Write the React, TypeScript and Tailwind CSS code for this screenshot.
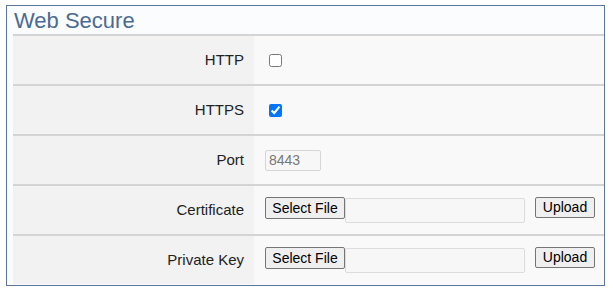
import React from "react";

const Row = ({ label, children, first }: { label: string; children: React.ReactNode; first?: boolean }) => (
  <div className={`flex h-[50px] ${first ? "border-t-2" : "border-t-2"} border-[#d4d4d4]`}>
    <div className="w-[241px] bg-[#f2f2f2] flex items-center justify-end pr-[10px] text-[15px] text-[#222]">
      {label}
    </div>
    <div className="flex-1 bg-[#f9f9f9] flex items-center pl-[11px]">{children}</div>
  </div>
);

const FileRow = ({ label }: { label: string }) => (
  <Row label={label}>
    <div className="flex items-start">
      <button className="w-[80px] h-[22px] bg-[#efefef] border border-[#767676] rounded-[2px] text-[14px] text-black leading-none mt-[-1px]">
        Select File
      </button>
      <div className="w-[180px] h-[25px] border border-[#dcdcdc] rounded-[2px] bg-[#f7f7f7]" />
      <button className="ml-[10px] w-[60px] h-[21px] bg-[#efefef] border border-[#767676] rounded-[2px] text-[14px] text-black leading-none mt-[-1px]">
        Upload
      </button>
    </div>
  </Row>
);

export default function App() {
  return (
    <div className="w-[613px] h-[295px] bg-white pt-[5px] pl-[6px]" style={{ fontFamily: '"Liberation Sans", Arial, sans-serif' }}>
      <div className="w-[599px] h-[281px] border border-[#5b7699] bg-[#fbfcfd] pl-[6px] flex flex-col">
        <div className="h-[28px] flex items-end pl-[1px] pb-[2px] text-[22px] leading-none text-[#4b6a91]">
          Web Secure
        </div>
        <div className="flex flex-col">
          <Row label="HTTP" first>
            <input type="checkbox" className="w-[13px] h-[13px] ml-[4px] m-0 mt-[1px]" readOnly />
          </Row>
          <Row label="HTTPS">
            <input type="checkbox" checked className="w-[13px] h-[13px] ml-[4px] m-0 mt-[1px]" readOnly />
          </Row>
          <Row label="Port">
            <input
              type="text"
              value="8443"
              readOnly
              className="w-[56px] h-[21px] border border-[#d6d6d6] rounded-[2px] bg-[#f7f7f7] text-[14px] text-[#777] pl-[3px] outline-none"
            />
          </Row>
          <FileRow label="Certificate" />
          <FileRow label="Private Key" />
        </div>
      </div>
    </div>
  );
}
